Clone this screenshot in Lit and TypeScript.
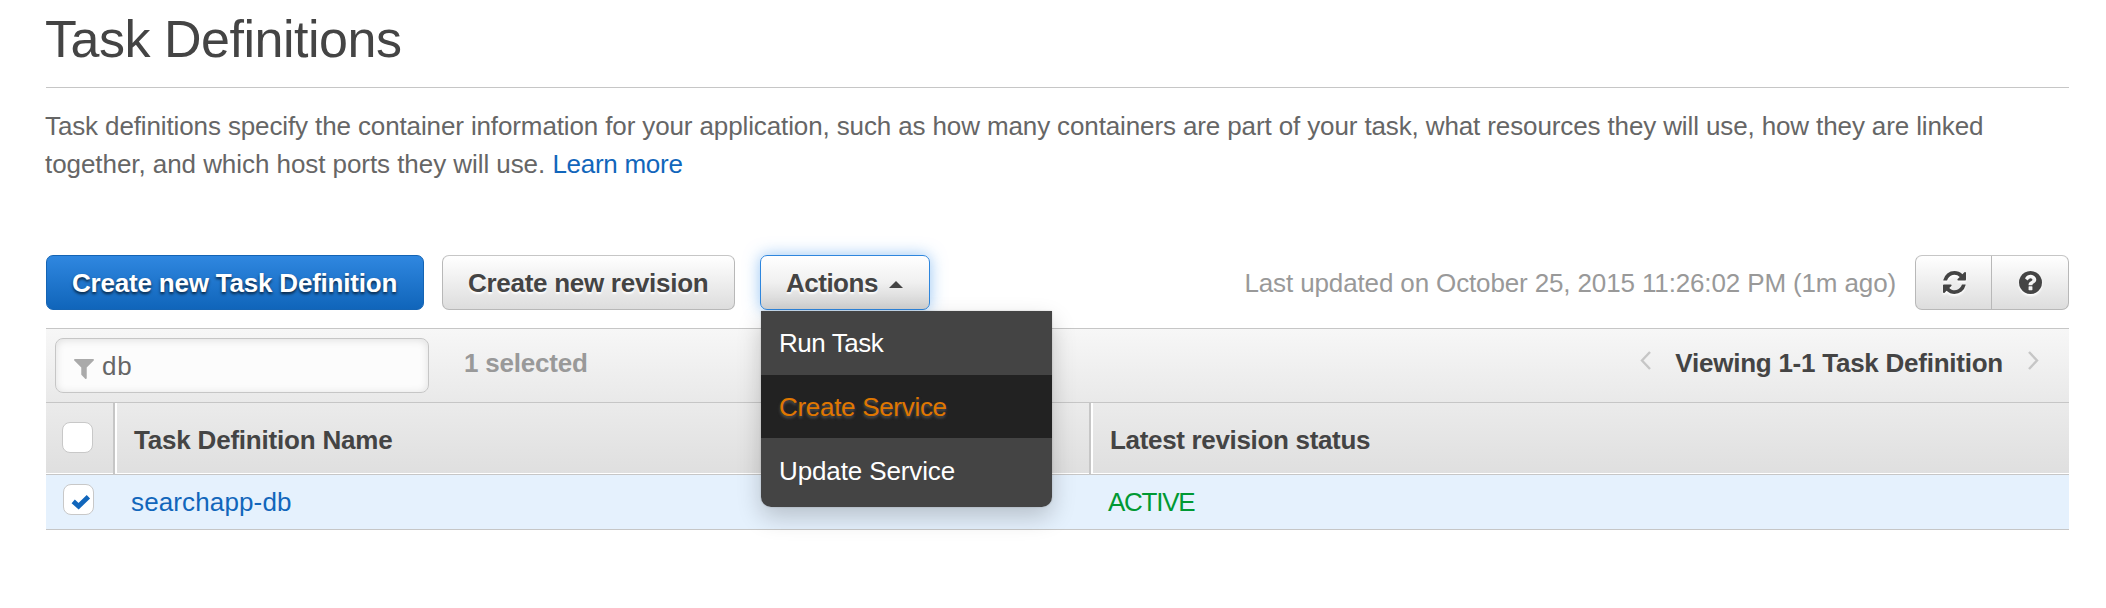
import { LitElement, html, css } from "lit";
import { customElement, property, state } from "lit/decorators.js";

const FILTER =
  "M1595 295q17 41-14 70l-493 493v742q0 42-39 59-13 5-25 5-27 0-45-19l-256-256q-19-19-19-45v-486l-493-493q-31-29-14-70 17-39 59-39h1280q42 0 59 39z";
const REFRESH =
  "M1639 1056q0 5-1 7-64 268-268 434.5t-478 166.5q-146 0-282.5-55t-243.5-157l-129 129q-19 19-45 19t-45-19-19-45v-448q0-26 19-45t45-19h448q26 0 45 19t19 45-19 45l-137 137q71 66 161 102t187 36q134 0 250-65t186-179q11-17 53-117 8-23 30-23h192q13 0 22.5 9.5t9.5 22.5zm25-800v448q0 26-19 45t-45 19h-448q-26 0-45-19t-19-45 19-45l138-138q-148-137-349-137-134 0-250 65t-186 179q-11 17-53 117-8 23-30 23h-199q-13 0-22.5-9.5t-9.5-22.5v-7q65-268 270-434.5t480-166.5q146 0 284 55.5t245 156.5l130-129q19-19 45-19t45 19 19 45z";
const HELP =
  "M1024 1376v-192q0-14-9-23t-23-9h-192q-14 0-23 9t-9 23v192q0 14 9 23t23 9h192q14 0 23-9t9-23zm256-672q0-88-55.5-163t-138.5-116-170-41q-243 0-371 213-15 24 8 42l132 100q7 6 19 6 16 0 25-12 53-68 86-92 34-24 86-24 48 0 85.5 26t37.5 59q0 38-20 61t-68 45q-63 28-115.5 86.5t-52.5 125.5v36q0 14 9 23t23 9h192q14 0 23-9t9-23q0-19 21.5-49.5t54.5-49.5q32-18 49-28.5t46-35 44.5-48 28-60.5 12.5-81zm384 192q0 209-103 385.5t-279.5 279.5-385.5 103-385.5-103-279.5-279.5-103-385.5 103-385.5 279.5-279.5 385.5-103 385.5 103 279.5 279.5 103 385.5z";

@customElement("check-box")
export class CheckBox extends LitElement {
  @property({ type: Boolean }) checked = false;
  static styles = css`
    :host { display: block; width: 31px; height: 31px; }
    .box {
      box-sizing: border-box; width: 31px; height: 31px;
      border: 1px solid #c8c8c8; border-radius: 8px; background: #fff;
    }
    svg { display: block; }
  `;
  render() {
    return html`<div class="box">
      ${this.checked
        ? html`<svg width="29" height="29" viewBox="1 1 29 29">
            <path d="M10.2 17.4 15.6 22.3 25.4 12.8" fill="none" stroke="#16b" stroke-width="4.8" />
          </svg>`
        : ""}
    </div>`;
  }
}

@customElement("actions-menu")
export class ActionsMenu extends LitElement {
  @state() private items = [
    { label: "Run Task", cls: "item run" },
    { label: "Create Service", cls: "item create active" },
    { label: "Update Service", cls: "item update" },
  ];
  static styles = css`
    :host { display: block; position: relative; }
    .button {
      box-sizing: border-box; height: 55px; width: 170px; padding: 1px 0 0 25px;
      display: flex; align-items: center; gap: 11px;
      font: bold 26px/53px "Liberation Sans", Arial, sans-serif; letter-spacing: -0.5px;
      color: #444; text-shadow: 0 2px 2px #fff;
      border: 1px solid #2e86dd; border-radius: 7px;
      background: linear-gradient(#fff, #f0f0f0 50%, #d0d0d0);
      box-shadow: 0 0 16px rgba(65, 150, 235, 0.55);
    }
    .button svg { margin-top: 2px; }
    .menu {
      position: absolute; z-index: 2; left: 1px; top: 56px; width: 291px;
      background: #444; border-radius: 0 0 10px 10px; overflow: hidden;
      padding-bottom: 4px;
    }
    .shadow {
      position: absolute; z-index: 1; left: 1px; top: 56px; width: 291px; height: 196px;
      border-radius: 0 0 10px 10px; box-shadow: 0 10px 24px rgba(0, 0, 0, 0.2), 0 0 2px rgba(0, 0, 0, 0.2);
    }
    .item {
      padding-left: 18px; color: #fff; white-space: nowrap;
      font: 26px/64px "Liberation Sans", Arial, sans-serif;
    }
    .run { letter-spacing: -0.45px; }
    .create { letter-spacing: -0.3px; line-height: 62px; padding-top: 1px; }
    .update { letter-spacing: -0.12px; padding-top: 1px; }
    .active { background: #222; color: #e07700; text-shadow: 0 2px 3px #555; }
  `;
  render() {
    return html`
      <div class="button">Actions
        <svg width="14" height="7" viewBox="0 0 14 7"><path d="M0 7 7 0l7 7z" fill="#444" /></svg>
      </div>
      <div class="shadow"></div>
      <div class="menu">${this.items.map((i) => html`<div class=${i.cls}>${i.label}</div>`)}</div>
    `;
  }
}

@customElement("app-root")
export class AppRoot extends LitElement {
  static styles = css`
    :host {
      display: block; box-sizing: border-box; min-height: 608px; background: #fff;
      padding: 0 37px 0 46px; color: #444; white-space: nowrap;
      font: 26px/38px "Liberation Sans", Arial, sans-serif;
    }
    * { box-sizing: border-box; }
    svg { display: block; }
    h1 {
      margin: 0; height: 88px; border-bottom: 1px solid #c6c6c6; text-indent: -1px;
      font-size: 52px; font-weight: 400; line-height: 78px; letter-spacing: -0.48px;
    }
    .intro { margin: 19px 0 0 -1px; color: #666; }
    .l1 { letter-spacing: -0.123px; }
    .l2 { letter-spacing: -0.062px; }
    .link { color: #16b; }
    .intro .link { letter-spacing: -0.28px; }
    .toolbar { display: flex; align-items: center; height: 55px; margin-top: 72px; }
    .btn {
      height: 55px; border-radius: 7px; border: 1px solid #b8b8b8; border-top-color: #c6c6c6;
      font-weight: bold; line-height: 53px; padding: 1px 0 0 25px;
      background: linear-gradient(#fff, #ddd); text-shadow: 0 2px 2px #fff;
    }
    .primary {
      width: 378px; margin-right: 18px; letter-spacing: -0.2px; color: #fff;
      border-color: #1464b4; background: linear-gradient(#2f87e0, #1065ba);
      text-shadow: 0 2px 3px rgba(0, 0, 0, 0.7);
    }
    .revision { width: 293px; margin-right: 25px; letter-spacing: -0.28px; }
    .updated { margin-left: auto; margin-right: 19px; color: #999; letter-spacing: -0.134px; }
    .group { display: flex; width: 154px; padding: 0; }
    .cell { flex: 1; display: flex; align-items: center; justify-content: center; }
    .cell:first-child { flex: none; width: 75px; padding-left: 2px; }
    .cell + .cell { border-left: 1px solid #b8b8b8; }
    .cell svg { filter: drop-shadow(0 2px 1px #fff); }
    .filterbar {
      display: flex; align-items: center; height: 75px; margin-top: 18px; padding: 0 30px 0 9px;
      border: solid #c6c6c6; border-width: 1px 0; background: linear-gradient(#f7f7f7, #e9e9e9);
    }
    .search {
      display: flex; align-items: center; width: 374px; height: 55px; padding-left: 18px; gap: 8px;
      border: 1px solid #c6c6c6; border-radius: 8px; background: #fcfcfc; color: #666;
      box-shadow: inset 0 1px 8px rgba(0, 0, 0, 0.12); letter-spacing: 0.8px;
    }
    .search svg { margin-top: 6px; }
    .selected { margin: -6px 0 0 35px; font-weight: bold; color: #999; letter-spacing: -0.2px; }
    .pager { display: flex; align-items: center; margin: -6px 0 0 auto; font-weight: bold; letter-spacing: -0.244px; }
    .pager svg { margin-top: -4px; }
    .pager span { margin: 0 25px 0 24px; }
    .row { display: grid; grid-template-columns: 69px 976px 1fr; }
    .head {
      height: 72px; font-weight: bold; border-bottom: 1px solid #c6c6c6;
      background: linear-gradient(#ebebeb, #dfdfdf); box-shadow: inset 0 -1px #fff;
    }
    .th { border-right: 2px solid #c6c6c6; border-left: 2px solid #fff; padding: 17px 0 0 17px; line-height: 40px; }
    .th.first { border-left: 0; padding: 19px 0 0 16px; }
    .th.last { border-right: 0; }
    .name { letter-spacing: -0.2px; }
    .last { letter-spacing: -0.326px; }
    .body { height: 55px; background: #e5f1fd; border-bottom: 1px solid #c6c6c6; line-height: 54px; }
    .td.first { padding: 9px 0 0 17px; }
    .td.link { padding-left: 16px; letter-spacing: 0.13px; }
    .status { padding-left: 17px; color: #093; letter-spacing: -1.25px; }
  `;
  render() {
    return html`
      <h1>Task Definitions</h1>
      <p class="intro">
        <span class="l1">Task definitions specify the container information for your application, such as how many containers are part of your task, what resources they will use, how they are linked</span><br />
        <span class="l2">together, and which host ports they will use.</span> <span class="link">Learn more</span>
      </p>
      <div class="toolbar">
        <div class="btn primary">Create new Task Definition</div>
        <div class="btn revision">Create new revision</div>
        <actions-menu></actions-menu>
        <div class="updated">Last updated on October 25, 2015 11:26:02 PM (1m ago)</div>
        <div class="btn group">
          <div class="cell"><svg width="23" height="23" viewBox="128 128 1536 1536" fill="#444"><path d=${REFRESH} /></svg></div>
          <div class="cell"><svg width="23" height="23" viewBox="128 128 1536 1536" fill="#444"><path d=${HELP} /></svg></div>
        </div>
      </div>
      <div class="filterbar">
        <div class="search">
          <svg width="20" height="20" viewBox="190 256 1412 1408" fill="#aaa"><path d=${FILTER} /></svg>db
        </div>
        <div class="selected">1 selected</div>
        <div class="pager">
          <svg width="11" height="19" viewBox="0 0 11 19"><path d="M10 1 2 9.5 10 18" fill="none" stroke="#c6c6c6" stroke-width="2.4" /></svg>
          <span>Viewing 1-1 Task Definition</span>
          <svg width="11" height="19" viewBox="0 0 11 19"><path d="M1 1 9 9.5 1 18" fill="none" stroke="#c6c6c6" stroke-width="2.4" /></svg>
        </div>
      </div>
      <div class="row head">
        <div class="th first"><check-box></check-box></div>
        <div class="th name">Task Definition Name</div>
        <div class="th last">Latest revision status</div>
      </div>
      <div class="row body">
        <div class="td first"><check-box checked></check-box></div>
        <div class="td link">searchapp-db</div>
        <div class="status">ACTIVE</div>
      </div>
    `;
  }
}
